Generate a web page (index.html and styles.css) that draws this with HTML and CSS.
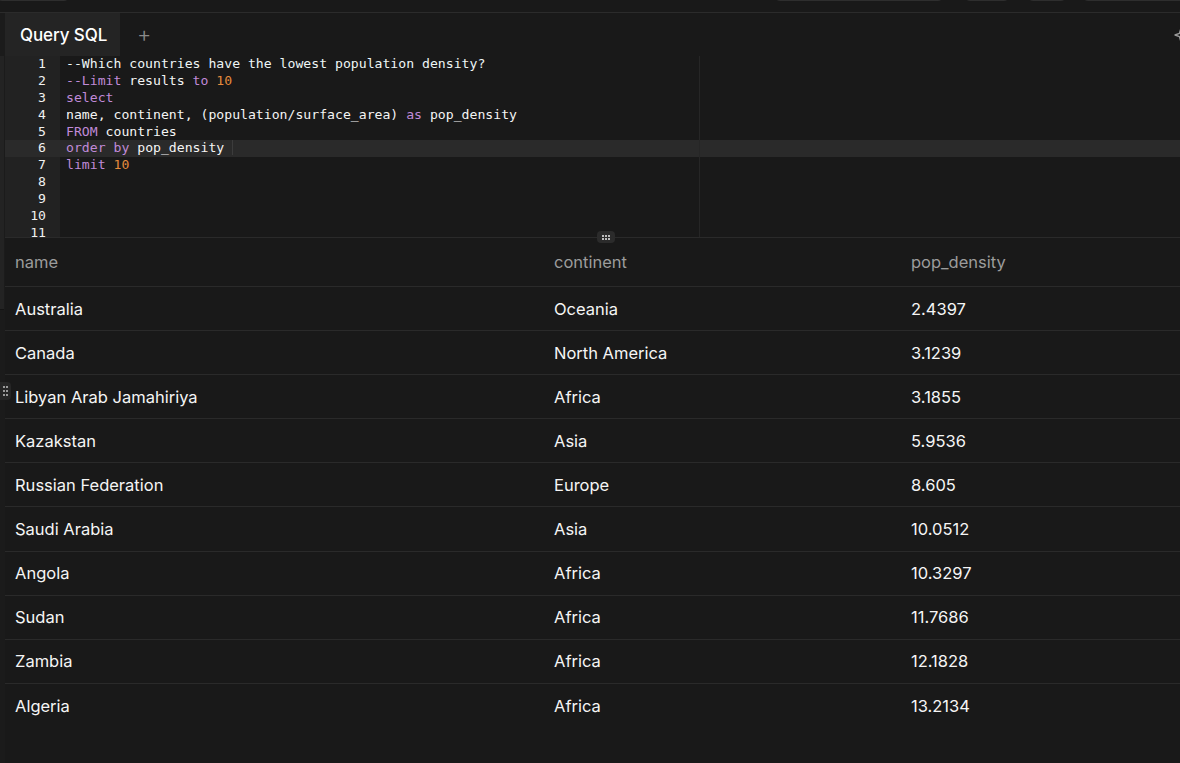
FILE: index.html
```html
<!DOCTYPE html>
<html>
<head>
<meta charset="utf-8">
<link rel="stylesheet" href="styles.css">
</head>
<body>
<div class="topbar">
  <span class="ghost g1"></span>
  <span class="spacer"></span>
  <span class="ghost g2"></span>
  <span class="ghost g3"></span>
  <span class="ghost g4"></span>
  <span class="ghost g5"></span>
</div>
<div class="app">
  <div class="edge">
    <div class="edge-top"></div>
    <div class="edge-handle"><span></span><span></span><span></span><span></span><span></span><span></span></div>
  </div>
  <div class="main">
    <div class="tabbar">
      <div class="tab">Query SQL</div>
      <div class="add">+</div>
      <div class="tabspace"></div>
      <svg class="spark" width="14" height="16" viewBox="0 0 14 16"><path d="M7 1 L8.6 6.4 L13 8 L8.6 9.6 L7 15 L5.4 9.6 L1 8 L5.4 6.4 Z" fill="none" stroke="#9a9a9a" stroke-width="1.4" stroke-linejoin="round"/></svg>
    </div>
    <div class="editor">
      <div class="gutter">
        <div class="ln">1</div><div class="ln">2</div><div class="ln">3</div><div class="ln">4</div><div class="ln">5</div>
        <div class="ln active">6</div><div class="ln">7</div><div class="ln">8</div><div class="ln">9</div><div class="ln">10</div><div class="ln">11</div>
      </div>
      <div class="code">
        <div class="cl"><span class="c1">--Which countries have the lowest population density?</span></div>
        <div class="cl"><span class="kw">--Limit</span> results <span class="kw">to</span> <span class="num">10</span></div>
        <div class="cl"><span class="kw">select</span></div>
        <div class="cl">name, continent, (population/surface_area) <span class="kw">as</span> pop_density</div>
        <div class="cl"><span class="kw">FROM</span> countries</div>
        <div class="cl active"><span class="kw">order</span> <span class="kw">by</span> pop_density <span class="cursor"></span></div>
        <div class="cl"><span class="kw">limit</span> <span class="num">10</span></div>
        <div class="cl"></div>
        <div class="cl"></div>
        <div class="cl"></div>
        <div class="cl"></div>
        <div class="ruler"></div>
      </div>
    </div>
    <div class="splitter"><div class="grip"><span></span><span></span><span></span><span></span><span></span><span></span></div></div>
    <div class="results">
      <div class="row head"><div>name</div><div>continent</div><div>pop_density</div></div>
      <div class="row"><div>Australia</div><div>Oceania</div><div>2.4397</div></div>
      <div class="row"><div>Canada</div><div>North America</div><div>3.1239</div></div>
      <div class="row"><div>Libyan Arab Jamahiriya</div><div>Africa</div><div>3.1855</div></div>
      <div class="row"><div>Kazakstan</div><div>Asia</div><div>5.9536</div></div>
      <div class="row"><div>Russian Federation</div><div>Europe</div><div>8.605</div></div>
      <div class="row"><div>Saudi Arabia</div><div>Asia</div><div>10.0512</div></div>
      <div class="row"><div>Angola</div><div>Africa</div><div>10.3297</div></div>
      <div class="row"><div>Sudan</div><div>Africa</div><div>11.7686</div></div>
      <div class="row"><div>Zambia</div><div>Africa</div><div>12.1828</div></div>
      <div class="row"><div>Algeria</div><div>Africa</div><div>13.2134</div></div>
    </div>
  </div>
</div>
</body>
</html>
```
FILE: styles.css
```css
html, body {
  margin: 0;
  padding: 0;
  background: #191919;
  height: 763px;
  overflow: hidden;
  font-family: Inter, "Noto Sans", sans-serif;
  color: #f2f2f2;
}

.topbar {
  height: 12px;
  border-bottom: 1px solid #2b2b2b;
  display: flex;
  overflow: hidden;
  background: #191919;
}
.ghost {
  display: block;
  height: 20px;
  margin-top: -19px;
  border: 1px solid #2e2e2e;
  border-radius: 6px;
  box-sizing: border-box;
}
.g1 { width: 74px; margin-left: -4px; }
.spacer { flex: 1; }
.g2 { width: 170px; margin-right: 20px; }
.g3 { width: 46px; margin-right: 17px; }
.g4 { width: 40px; margin-right: 15px; }
.g5 { width: 110px; margin-right: -12px; }

.app {
  display: flex;
  height: 750px;
}
.edge {
  width: 5px;
  background: #1b1b1b;
  position: relative;
  display: flex;
  flex-direction: column;
}
.edge-top {
  margin-top: 43px;
  height: 253px;
  width: 4px;
  background: #232323;
  border-bottom: 1px solid #141414;
}
.edge-handle {
  position: absolute;
  left: 0;
  top: 369px;
  width: 11px;
  height: 18px;
  background: #262626;
  border-radius: 0 4px 4px 0;
  display: grid;
  grid-template-columns: 2px 2px;
  grid-auto-rows: 2px;
  column-gap: 1px;
  row-gap: 2px;
  align-content: center;
  justify-content: center;
  z-index: 2;
}
.edge-handle span { background: #9a9a9a; }

.main {
  flex: 1;
  display: flex;
  flex-direction: column;
  min-width: 0;
}

.tabbar {
  height: 43px;
  display: flex;
  align-items: center;
}
.tab {
  height: 43px;
  box-sizing: border-box;
  padding: 0 0 0 16px;
  width: 116px;
  margin-left: -1px;
  display: flex;
  align-items: center;
  background: #242424;
  font-size: 17px;
  font-weight: 500;
  color: #ffffff;
  letter-spacing: -0.1px;
}
.add {
  margin-left: 17px;
  font-size: 22px;
  font-weight: 300;
  color: #8a8a8a;
  line-height: 1;
  margin-top: -2px;
}
.tabspace { flex: 1; }
.spark {
  margin-right: -8px;
  margin-top: 0;
}

.editor {
  height: 181px;
  display: flex;
  font-family: "DejaVu Sans Mono", "Liberation Mono", monospace;
  font-size: 13.15px;
  line-height: 16.9px;
  overflow: hidden;
}
.gutter {
  width: 55px;
  background: #222222;
  flex: none;
}
.ln {
  text-align: right;
  padding-right: 14px;
  color: #f0f0f0;
  height: 16.9px;
}
.ln.active { background: #2a2a2a; }
.code {
  flex: 1;
  position: relative;
}
.cl {
  height: 16.9px;
  padding-left: 6px;
  white-space: pre;
  color: #f4f4f4;
}
.cl.active { background: #2a2a2a; }
.c1 { color: #eef6f6; }
.kw { color: #c08ad8; }
.num { color: #e58a3c; }
.cursor {
  display: inline-block;
  width: 1px;
  height: 15px;
  background: #3c3c3c;
  vertical-align: -3px;
}
.ruler {
  position: absolute;
  left: 639px;
  top: 0;
  bottom: 0;
  width: 1px;
  background: #262626;
}

.splitter {
  height: 1px;
  background: #2a2a2a;
  position: relative;
}
.grip {
  position: absolute;
  left: 592px;
  top: -6px;
  width: 18px;
  height: 12px;
  border-radius: 4px;
  background: #2b2b2b;
  display: grid;
  grid-template-columns: 2px 2px 2px;
  grid-auto-rows: 2px;
  column-gap: 1px;
  row-gap: 1px;
  align-content: center;
  justify-content: center;
}
.grip span { background: #bdbdbd; }

.results {
  flex: 1;
  font-size: 16.5px;
}
.row {
  display: grid;
  grid-template-columns: 539px 357px 1fr;
  padding-left: 10px;
  height: 44.1px;
  box-sizing: border-box;
  align-items: center;
  border-bottom: 1px solid #2a2a2a;
  color: #f5f5f5;
}
.row:last-child { border-bottom: none; }
.row.head {
  height: 49px;
  color: #9c9c9c;
}
```
